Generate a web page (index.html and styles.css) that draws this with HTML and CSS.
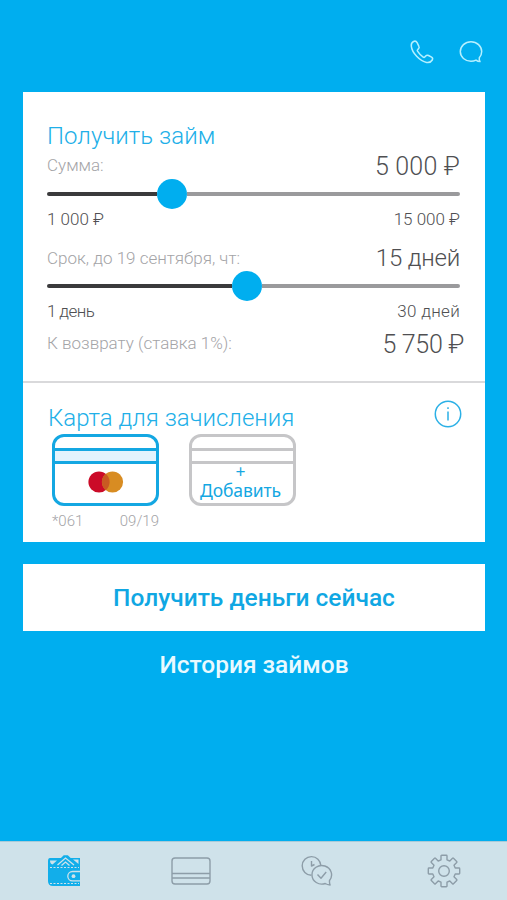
FILE: index.html
```html
<!DOCTYPE html>

<html lang="ru">
  <head>
    <meta charset="utf-8">
    <title>Получить займ</title>
    <link rel="stylesheet" href="styles.css">
  </head>
  <body>
    <header class="top-bar">
      <svg class="top-icon" width="26" height="26" viewBox="0 0 26 26">
        <path d="M4.500 2.500C3 3.300 2 4.900 2.300 7.200c.7 6.600 8.500 15.100 15.300 16.200 2.700.4 4.700-.7 5.700-2.400.6-1.200.3-2.200-.7-2.800l-3.100-1.700c-1.100-.6-2-.4-2.800.5l-.9 1c-.5.5-1 .5-1.600.1-2.400-1.600-4.300-3.700-5.700-5.900-.4-.7-.3-1.200.2-1.600l.8-.8c.8-.8.900-1.600.4-2.500L8.100 3.700C7.300 2.200 6.100 1.700 4.500 2.500z"/>
      </svg>
      <svg class="top-icon" width="26" height="26" viewBox="0 0 26 26">
        <path d="M21.300 18.800c1.500-1.700 2.400-3.800 2.400-6.200 0-5.500-4.800-9.900-10.700-9.900S2.300 7.100 2.300 12.600 7.100 22.200 13 22.200c1.800 0 3.500-.4 5-1.100 1.200.9 2.600 1.400 4 1.500-.6-1-.9-2.300-.7-3.800z"/>
      </svg>
    </header>
    <main>
      <div class="card">
        <!-- Loan amount and term -->
        <section class="loan">
          <h2 class="loan-title">Получить займ</h2>
          <div class="row">
            <span class="label label-sum">Сумма:</span>
            <span class="value">5 000 ₽</span>
          </div>
          <div class="slider slider-sum"><span class="filled"></span><span class="knob"></span><span class="rest"></span></div>
          <div class="limits">
            <span>1 000 ₽</span>
            <span>15 000 ₽</span>
          </div>
          <div class="row row-term">
            <span class="label">Срок, до 19 сентября, чт:</span>
            <span class="value value-term">15 дней</span>
          </div>
          <div class="slider slider-term"><span class="filled"></span><span class="knob"></span><span class="rest"></span></div>
          <div class="limits">
            <span class="min-term">1 день</span>
            <span class="max-term">30 дней</span>
          </div>
          <div class="row row-total">
            <span class="label label-total">К возврату (ставка 1%):</span>
            <span class="value value-total">5 750 ₽</span>
          </div>
        </section>
        <!-- Bank card for the payout -->
        <section class="payout">
          <div class="payout-head">
            <h2 class="payout-title">Карта для зачисления</h2>
            <svg class="info" width="28" height="28" viewBox="0 0 28 28">
              <circle cx="14" cy="14" r="12.700"/>
              <path d="M14 11.500v9M14 7.300v1.600"/>
            </svg>
          </div>
          <div class="bank-cards">
            <div class="bank-item">
              <div class="bank-card">
                <div class="stripe"></div>
                <svg class="brand" width="36" height="22" viewBox="0 0 36 22">
                  <circle cx="11" cy="11" r="10.600" fill="#cb0b28"/>
                  <circle cx="24.500" cy="11" r="10.600" fill="#d88c22"/>
                  <path d="M17.750 2.830a10.600 10.600 0 0 1 0 16.340a10.600 10.600 0 0 1 0-16.340z" fill="#c95a22"/>
                </svg>
              </div>
              <div class="caption"><span>*061</span><span>09/19</span></div>
            </div>
            <div class="bank-card bank-card-new">
              <div class="stripe"></div>
              <span class="add">+<br>Добавить</span>
            </div>
          </div>
        </section>
      </div>
      <button class="submit">Получить деньги сейчас</button>
      <a class="history">История займов</a>
    </main>
    <nav class="tabs">
      <svg class="tab-wallet" width="34" height="34" viewBox="0 0 34 34">
        <path d="M3 4h30v28H6q-5 0-5-5V7q0-3 2-3z" fill="#12aeea"/>
        <path d="M3 6.500h7L5.500 10.500Q3 10 3 6.500zM26 5.500h5.500v4.500z" fill="#cfe2ea"/>
        <path d="M8 11 17 2h3.500L30 11" fill="#12aeea" stroke="#12aeea" stroke-width="1.500"/>
        <path d="M10.500 11 18.500 4 27 11M14.500 11.500l4-3.500 4 3.500" fill="none" stroke="#cfe2ea" stroke-width="1.300"/>
        <path d="M3 13.500h29M3 29.500h29" fill="none" stroke="#cfe2ea" stroke-width="1" stroke-dasharray="2 1.500"/>
        <path d="M33 17.500h-7.500a4.700 4.700 0 0 0 0 9.400H33" fill="#12aeea" stroke="#cfe2ea" stroke-width="1.300"/>
        <circle cx="26.500" cy="22.200" r="1.900" fill="#cfe2ea"/>
      </svg>
      <svg class="tab-card" width="40" height="28" viewBox="0 0 40 28">
        <rect x="1" y="1" width="38" height="26" rx="3"/>
        <path d="M1 16.500h38M1 21h38"/>
      </svg>
      <svg class="tab-chat" width="32" height="32" viewBox="0 0 32 32">
        <path d="M10.300 20.200A9.300 9.300 0 1 1 19.800 10.600"/>
        <path d="M10.500 6v5l3-1.500"/>
        <path d="M28.500 25.500a9.800 9.300 0 1 0-4.300 3q2 1.200 4.900 1.500-.8-2-.6-4.500z"/>
        <path d="m16.500 19.500 3.500 3.700 5.200-6.200"/>
      </svg>
      <svg class="tab-gear" width="34" height="34" viewBox="0 0 34 34">
        <path d="M14 5.800V2q0-.7.700-.7h4.600q.7 0 .7.700v3.800l2.800 1.200 2.700-2.700q.5-.5 1 0l3.200 3.200q.5.500 0 1L27 11.200l1.200 2.800H32q.7 0 .7.700v4.600q0 .7-.7.700h-3.800L27 22.800l2.700 2.700q.5.500 0 1l-3.200 3.200q-.5.500-1 0L22.800 27 20 28.200V32q0 .7-.7.700h-4.600q-.7 0-.7-.7v-3.800L11.200 27l-2.700 2.700q-.5.500-1 0l-3.200-3.200q-.5-.5 0-1L7 22.800 5.800 20H2q-.7 0-.7-.7v-4.600q0-.7.700-.7h3.800L7 11.200 4.300 8.500q-.5-.5 0-1l3.200-3.200q.5-.5 1 0L11.200 7z"/>
        <circle cx="17" cy="17" r="5.300"/>
      </svg>
    </nav>
  </body>
</html>
```

FILE: styles.css
```css
* {
  box-sizing: border-box;
}

body {
  margin: 0;
  height: 900px;
  display: flex;
  flex-direction: column;
  background-color: #00aeef;
  font-family: Roboto, "Liberation Sans", sans-serif;
  font-weight: 300;
  color: #4f4f52;
}

h2 {
  margin: 0;
  font-weight: 300;
  color: #21afe8;
}

.top-bar {
  height: 92px;
  padding: 39px 23px 0 0;
  display: flex;
  justify-content: flex-end;
  gap: 23px;
}

.top-icon {
  fill: none;
  stroke: #b5f0ff;
  stroke-width: 1.5;
  stroke-linejoin: round;
}

main {
  flex: 1;
  padding: 0 22px 0 23px;
  display: flex;
  flex-direction: column;
}

.card {
  height: 450px;
  background-color: #fff;
}

.loan {
  height: 291px;
  padding: 30px 25px 0 24px;
  border-bottom: 2px solid #d9d9db;
}

.loan-title {
  font-size: 24px;
  line-height: 28px;
  letter-spacing: 0.05px;
}

.row {
  height: 32px;
  display: flex;
  align-items: center;
  justify-content: space-between;
  white-space: nowrap;
}

.row-term {
  margin-top: 10px;
}

.row-total {
  margin: 4px -4px 0 0;
}

.label {
  font-size: 17px;
  color: #a4a4a7;
}

.label-sum,
.label-total {
  padding-bottom: 2px;
}

.value {
  font-size: 25px;
  letter-spacing: 0.2px;
}

.value-term {
  font-size: 24px;
  letter-spacing: -0.2px;
}

.value-total {
  letter-spacing: -0.3px;
}

.slider {
  height: 24px;
  display: flex;
  align-items: center;
}

.filled {
  height: 4px;
  border-radius: 2px 0 0 2px;
  background-color: #3a3a3c;
}

.rest {
  flex: 1;
  height: 4px;
  border-radius: 0 2px 2px 0;
  background-color: #9a9a9c;
}

.knob {
  width: 30px;
  height: 30px;
  border-radius: 50%;
  background-color: #00aeef;
}

.slider-sum .filled {
  width: 110px;
}

.slider-term .filled {
  width: 185px;
}

.limits {
  height: 26px;
  display: flex;
  align-items: center;
  justify-content: space-between;
  font-size: 17px;
}

.min-term {
  letter-spacing: -0.6px;
}

.max-term {
  letter-spacing: 0.3px;
}

.payout {
  padding: 17px 23px 0 25px;
}

.payout-head {
  height: 34px;
  display: flex;
  justify-content: space-between;
}

.payout-title {
  font-size: 24px;
  line-height: 37px;
}

.info {
  fill: none;
  stroke: #2bb0e6;
  stroke-width: 1.5;
}

.bank-cards {
  padding-left: 4px;
  display: flex;
  gap: 30px;
}

.bank-card {
  width: 107px;
  height: 72px;
  padding-top: 11px;
  border: 3px solid #14a7e2;
  border-radius: 12px;
  display: flex;
  flex-direction: column;
  align-items: center;
}

.stripe {
  width: 100%;
  height: 16px;
  flex: none;
  border-top: 3px solid #14a7e2;
  border-bottom: 3px solid #14a7e2;
  background-color: #e3f3fd;
}

.brand {
  margin-top: 7px;
}

.bank-card-new,
.bank-card-new .stripe {
  border-color: #c6c6c8;
}

.bank-card-new .stripe {
  background-color: #fff;
}

.add {
  margin: -2px 4px 0 0;
  text-align: center;
  font-family: "Noto Sans", sans-serif;
  font-size: 17.5px;
  line-height: 19px;
  font-weight: 400;
  letter-spacing: -0.1px;
  color: #14a7e2;
}

.caption {
  display: flex;
  justify-content: space-between;
  font-size: 15px;
  line-height: 30px;
  color: #a4a4a7;
}

.submit {
  height: 67px;
  margin-top: 22px;
  padding: 0;
  border: none;
  background-color: #fff;
  font-family: inherit;
  font-size: 24.5px;
  font-weight: 500;
  color: #10a7e3;
  cursor: pointer;
}

.history {
  margin-top: 17px;
  text-align: center;
  font-size: 24.5px;
  line-height: 33px;
  font-weight: 500;
  color: #e9faff;
}

.tabs {
  height: 59px;
  padding: 0 46px 0 47px;
  border-top: 1px solid #a9cbd8;
  display: flex;
  align-items: center;
  justify-content: space-between;
  background-color: #cfe2ea;
}

.tab-card,
.tab-chat,
.tab-gear {
  fill: none;
  stroke: #8d9da8;
  stroke-width: 1.4;
  stroke-linejoin: round;
}

.tab-card {
  margin-left: -4px;
}

.tab-chat {
  margin-left: -3px;
}
```
